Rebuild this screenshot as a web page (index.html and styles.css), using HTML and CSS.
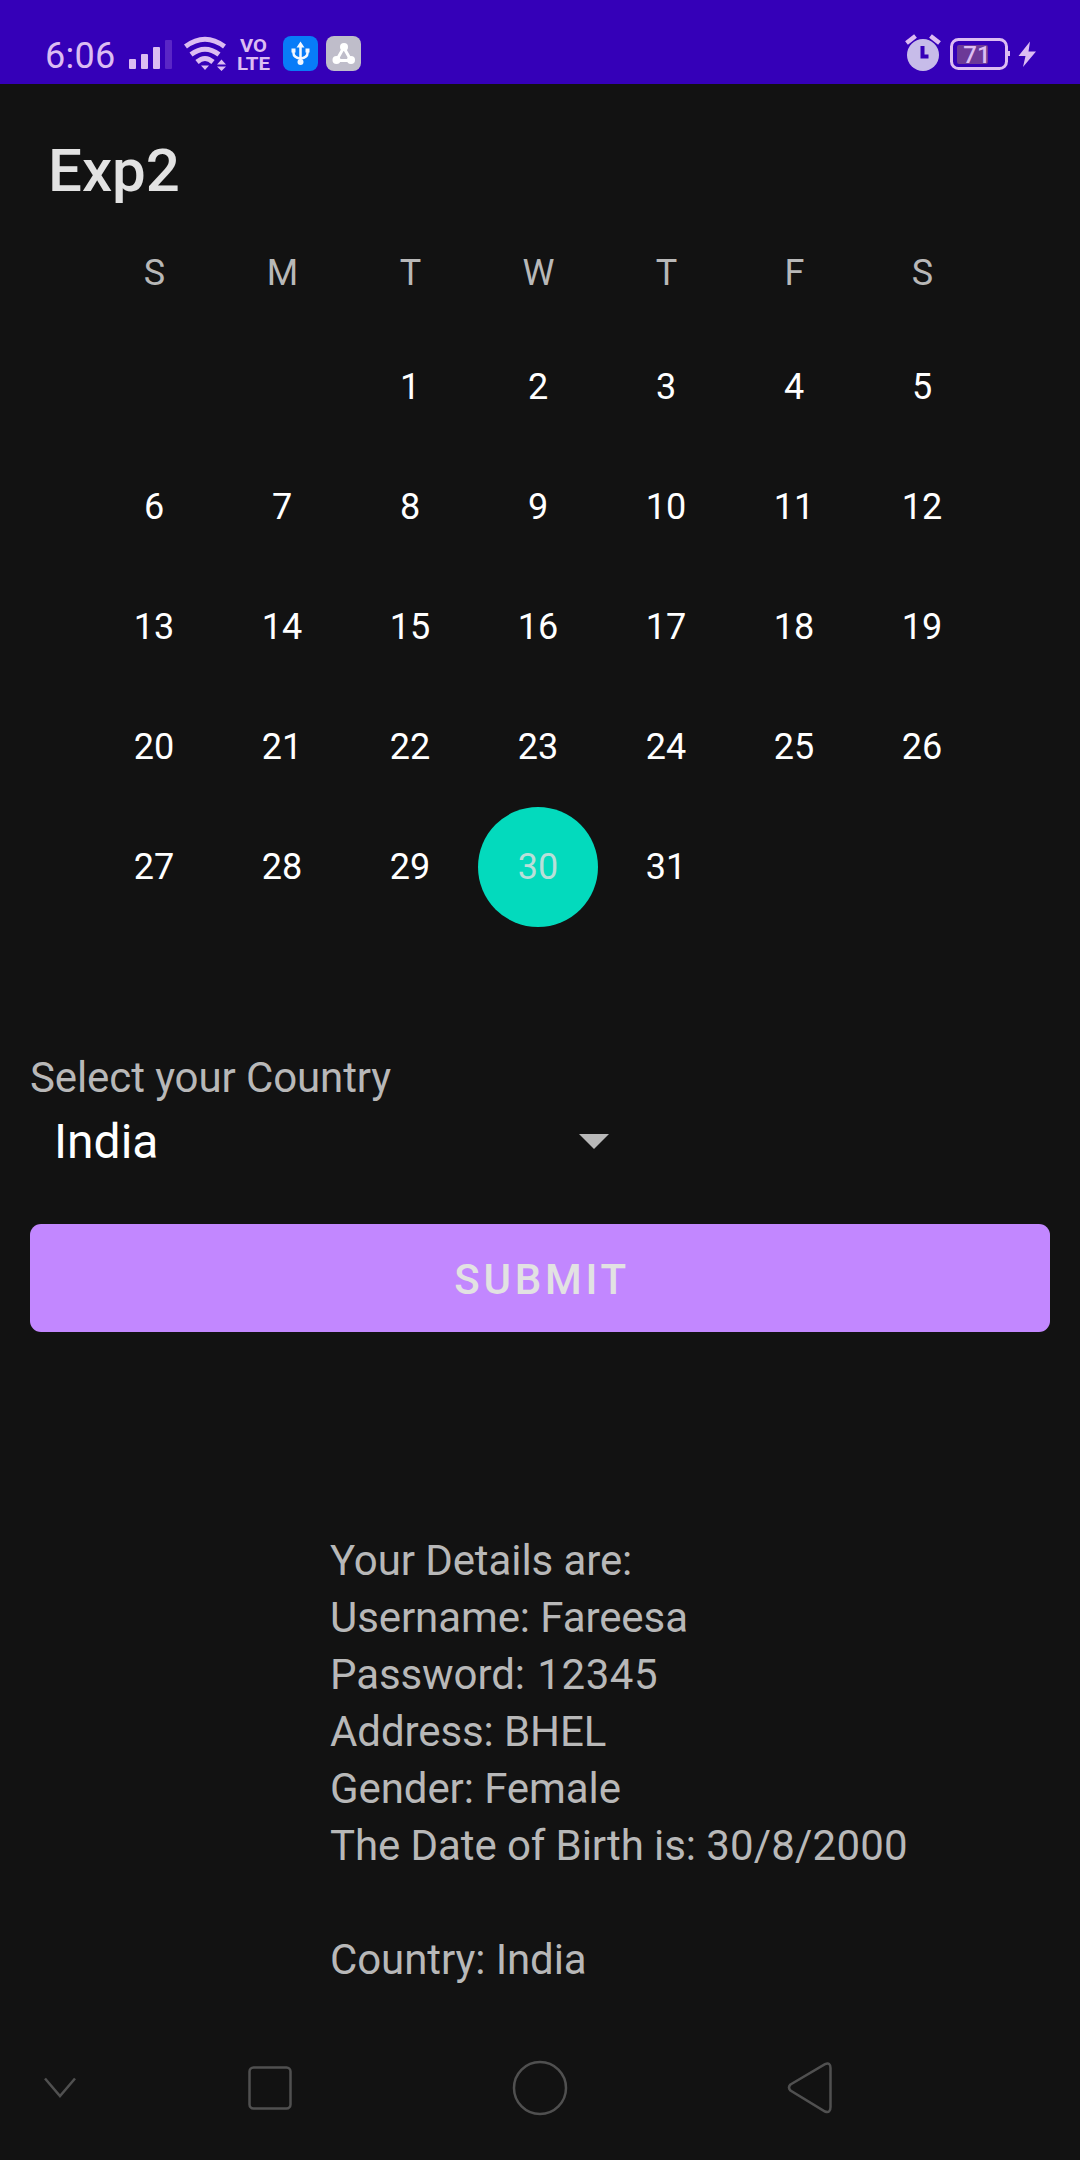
FILE: index.html
```html
<!DOCTYPE html>
<html lang="en">
<head>
<meta charset="utf-8">
<title>Exp2</title>
<link rel="stylesheet" href="styles.css">
</head>
<body>
<header class="status-bar">
  <span class="clock">6:06</span>
  <svg class="status-icons" width="236" height="44" viewBox="128 32 236 44">
    <g fill="#dcbcf2">
      <rect x="129" y="59" width="7" height="10" rx="1"/>
      <rect x="141" y="54" width="7" height="15" rx="1"/>
      <rect x="153" y="47" width="7" height="22" rx="1"/>
    </g>
    <rect x="165" y="40" width="7" height="29" rx="1" fill="#5a26c6"/>
    <g fill="none" stroke="#dcbcf2" stroke-width="5">
      <path d="M185.500 46.500Q205 32 224.500 46.500"/>
      <path d="M191 54.500Q205 44 219 54.500"/>
      <path d="M197 62Q205 55 213 62"/>
    </g>
    <path d="M201 65.500h8l-4 4.500zM217 64.500l4.500-5 4.500 5zM217 66.500h9l-4.500 4.500z" fill="#dcbcf2"/>
    <text class="volte" x="253.500" y="51.500" textLength="27" lengthAdjust="spacingAndGlyphs">VO</text>
    <text class="volte" x="253.500" y="70.300" textLength="33" lengthAdjust="spacingAndGlyphs">LTE</text>
    <rect x="283" y="36" width="35" height="35" rx="8" fill="#087cf8"/>
    <g fill="none" stroke="#f2f7ff" stroke-width="2.500">
      <path d="M300.500 45v18M293.500 50v3q0 4.500 7 5.500M307.500 50v3q0 4.500-7 5.500"/>
    </g>
    <path d="M300.500 41.500l4 6h-8zM291.500 48.500h4v4h-4zM305.500 48.500h4v4h-4z" fill="#f2f7ff"/>
    <circle cx="300.500" cy="62" r="3" fill="#f2f7ff"/>
    <rect x="326" y="36" width="35" height="35" rx="8" fill="#bfbdca"/>
    <path d="M343.500 48l-6.500 11.500M344 48l6.500 11.500M337 60.500h13" fill="none" stroke="#fff" stroke-width="3"/>
    <g fill="#fff"><circle cx="344" cy="47" r="4"/><circle cx="336.500" cy="60" r="4"/><circle cx="351" cy="60" r="4"/></g>
  </svg>
  <svg class="status-icons status-right" width="134" height="44" viewBox="904 32 134 44">
    <circle cx="923" cy="55" r="16" fill="#c7bce9"/>
    <path d="M922.500 46v10.500h6" fill="none" stroke="#3500b8" stroke-width="4"/>
    <path d="M906.500 43l9-7M930.500 36l9 7" fill="none" stroke="#dcbcf2" stroke-width="4.500"/>
    <rect x="951.500" y="39.500" width="55" height="29" rx="7" fill="none" stroke="#dcbcf2" stroke-width="3"/>
    <path d="M1008 51h2v5h-2z" fill="#dcbcf2"/>
    <rect x="957" y="45" width="31" height="19" rx="2" fill="#6c3997"/>
    <text class="charge" x="977" y="63">71</text>
    <path d="M1030 41.500l-11.500 14.500h7l-2.500 11 13-15.500h-7.500z" fill="#dcbcf2"/>
  </svg>
</header>
<main>
  <h1 class="title">Exp2</h1>
  <section class="calendar">
    <div class="weekdays"><span>S</span><span>M</span><span>T</span><span>W</span><span>T</span><span>F</span><span>S</span></div>
    <div class="days">
      <span class="first">1</span><span>2</span><span>3</span><span>4</span><span>5</span>
      <span>6</span><span>7</span><span>8</span><span>9</span><span>10</span><span>11</span><span>12</span>
      <span>13</span><span>14</span><span>15</span><span>16</span><span>17</span><span>18</span><span>19</span>
      <span>20</span><span>21</span><span>22</span><span>23</span><span>24</span><span>25</span><span>26</span>
      <span>27</span><span>28</span><span>29</span><span class="selected">30</span><span>31</span>
    </div>
  </section>
  <div class="label">Select your Country</div>
  <div class="spinner">
    <span class="choice">India</span>
    <svg width="30" height="15" viewBox="0 0 30 15"><path d="M0 0h30L15 15z" fill="#b8b8b8"/></svg>
  </div>
  <button class="submit">SUBMIT</button>
  <div class="details">Your Details are:
Username: Fareesa
Password: <span class="digits">12345</span>
Address: BHEL
Gender: Female
The Date of Birth is: <span class="date">30/8/2000</span>

Country: India</div>
</main>
<nav class="nav-bar">
  <svg class="hide" width="36" height="24" viewBox="0 0 36 24"><path d="M3 2.500L18 20 33 2.500"/></svg>
  <svg class="recents" width="46" height="46" viewBox="0 0 46 46"><rect x="2.500" y="2.500" width="41" height="41" rx="4"/></svg>
  <svg class="home" width="56" height="56" viewBox="0 0 56 56"><circle cx="28" cy="28" r="26"/></svg>
  <svg class="back" width="48" height="56" viewBox="0 0 48 56"><path d="M4.500 24.500L39 4.200Q44.500 2 44.500 8V47Q44.500 53.500 39 51.500L4.500 30.500Q1.500 27.500 4.500 24.500z"/></svg>
</nav>
</body>
</html>
```
FILE: styles.css
```css
* { box-sizing: border-box; }
body {
  margin: 0;
  width: 1080px;
  height: 2160px;
  display: flex;
  flex-direction: column;
  background: #121212;
  color: #fff;
  font-family: Roboto, sans-serif;
  overflow: hidden;
}
.status-bar {
  height: 84px;
  flex: none;
  display: flex;
  align-items: flex-start;
  padding: 32px 42px 0 45px;
  background: #3500b8;
}
.clock {
  width: 83px;
  font-size: 36px;
  line-height: 48px;
  letter-spacing: 0.3px;
  color: #dcbcf2;
}
.status-icons { display: block; }
.status-right { margin-left: auto; }
.volte {
  font: 700 19px Roboto, sans-serif;
  fill: #dcbcf2;
  text-anchor: middle;
}
.charge {
  font: 500 24px Roboto, sans-serif;
  fill: #dcbcf2;
  text-anchor: middle;
}
main {
  flex: 1;
  display: flex;
  flex-direction: column;
  padding: 52px 30px 0;
}
.title {
  margin: 0 0 9px 18px;
  font-size: 60px;
  font-weight: 500;
  line-height: 70px;
  color: #e2e2e2;
}
.calendar {
  margin: 0 60px;
  width: 896px;
  font-size: 36px;
  text-align: center;
}
.weekdays, .days {
  display: grid;
  grid-template-columns: repeat(7, 128px);
}
.weekdays {
  height: 112px;
  padding-top: 4px;
  line-height: 108px;
  text-indent: 1px;
  color: #b8b8b8;
}
.days { line-height: 120px; }
.first { grid-column: 3; }
.selected {
  justify-self: center;
  width: 120px;
  height: 120px;
  border-radius: 50%;
  background: #03dabd;
  color: #b9dfd9;
}
.label {
  margin-top: 122px;
  font-size: 42px;
  line-height: 57px;
  letter-spacing: -0.1px;
  color: #b8b8b8;
}
.spinner {
  display: flex;
  align-items: center;
  justify-content: space-between;
  width: 579px;
  height: 70px;
  padding-left: 24px;
  font-size: 48px;
  line-height: 70px;
}
.choice { padding-top: 2px; }
.submit {
  height: 108px;
  margin: 48px 0 0;
  padding: 3px 0 0 4px;
  border: 0;
  border-radius: 11px;
  background: #c287ff;
  color: #e2e2e2;
  font: 500 42px Roboto, sans-serif;
  letter-spacing: 3.75px;
}
.details {
  margin: 200px 0 0 300px;
  font-size: 42px;
  line-height: 57px;
  letter-spacing: -0.09px;
  white-space: pre;
  color: #b8b8b8;
}
.digits { letter-spacing: 0.6px; margin-left: 2px; }
.date { letter-spacing: 0.2px; }
.nav-bar {
  flex: none;
  height: 144px;
  display: flex;
  align-items: center;
  padding-left: 42px;
  fill: none;
  stroke: #505050;
  stroke-width: 2.5;
}
.recents { margin-left: 169px; }
.home { margin-left: 219px; }
.back { margin-left: 218px; }
```
